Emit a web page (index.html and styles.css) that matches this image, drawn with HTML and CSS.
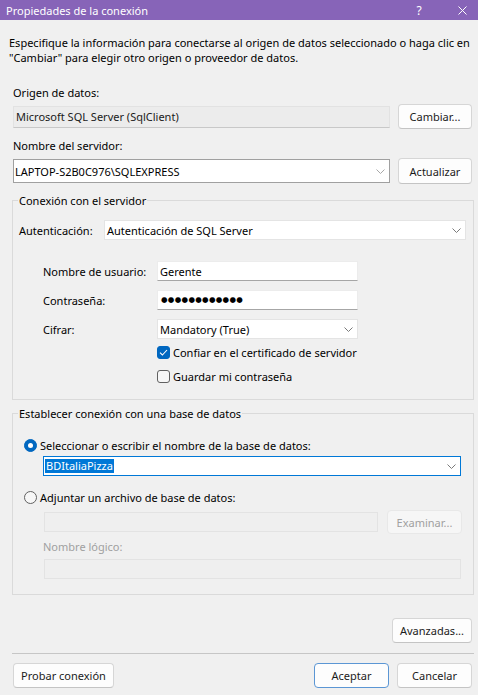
FILE: index.html
```html
<!DOCTYPE html>
<html lang="es">
<head>
<meta charset="utf-8">
<title>Propiedades de la conexión</title>
<link rel="stylesheet" href="styles.css">
</head>
<body>
<div class="titlebar">
  <span class="title">Propiedades de la conexión</span>
  <span class="tb-help">?</span>
  <svg class="tb-close" width="9" height="9" viewBox="0 0 9 9"><path d="M0.5 0.5 L8.5 8.5 M8.5 0.5 L0.5 8.5" stroke="#fff" stroke-width="1" fill="none"/></svg>
</div>
<div class="main">
  <p class="desc">Especifique la información para conectarse al origen de datos seleccionado o haga clic en<br>"Cambiar" para elegir otro origen o proveedor de datos.</p>

  <div class="lbl lbl-origen">Origen de datos:</div>
  <div class="row row-origen">
    <div class="readonly">Microsoft SQL Server (SqlClient)</div>
    <button class="btn">Cambiar...</button>
  </div>

  <div class="lbl lbl-server">Nombre del servidor:</div>
  <div class="row row-server">
    <div class="combo combo-server">
      <span>LAPTOP-S2B0C976\SQLEXPRESS</span>
      <svg class="chev chev-light" width="9" height="5" viewBox="0 0 9 5"><path d="M0.5 0.5 L4.5 4.5 L8.5 0.5" fill="none" stroke="currentColor" stroke-width="1"/></svg>
    </div>
    <button class="btn btn-h26">Actualizar</button>
  </div>

  <fieldset class="group group-server">
    <legend>Conexión con el servidor</legend>
    <div class="auth-row">
      <span class="auth-label">Autenticación:</span>
      <div class="combo combo-auth">
        <span>Autenticación de SQL Server</span>
        <svg class="chev" width="9" height="5" viewBox="0 0 9 5"><path d="M0.5 0.5 L4.5 4.5 L8.5 0.5" fill="none" stroke="currentColor" stroke-width="1"/></svg>
      </div>
    </div>
    <div class="field-row fr-user">
      <span class="field-label">Nombre de usuario:</span>
      <div class="textbox">Gerente</div>
    </div>
    <div class="field-row fr-gap">
      <span class="field-label">Contraseña:</span>
      <div class="textbox"><span class="pw">●●●●●●●●●●●●</span></div>
    </div>
    <div class="field-row fr-gap">
      <span class="field-label">Cifrar:</span>
      <div class="combo combo-cifrar">
        <span>Mandatory (True)</span>
        <svg class="chev" width="9" height="5" viewBox="0 0 9 5"><path d="M0.5 0.5 L4.5 4.5 L8.5 0.5" fill="none" stroke="currentColor" stroke-width="1"/></svg>
      </div>
    </div>
    <div class="check-row cr-first">
      <span class="checkbox checked"><svg width="9" height="7" viewBox="0 0 9 7"><path d="M1 3.6 L3.4 6 L8 1" fill="none" stroke="#fff" stroke-width="1.1"/></svg></span>
      <span>Confiar en el certificado de servidor</span>
    </div>
    <div class="check-row cr-second">
      <span class="checkbox"></span>
      <span>Guardar mi contraseña</span>
    </div>
  </fieldset>

  <fieldset class="group group-db">
    <legend>Establecer conexión con una base de datos</legend>
    <div class="radio-row rr-first">
      <span class="radio selected"><span class="radio-dot"></span></span>
      <span>Seleccionar o escribir el nombre de la base de datos:</span>
    </div>
    <div class="combo combo-db">
      <span class="sel">BDItaliaPizza</span>
      <svg class="chev" width="9" height="5" viewBox="0 0 9 5"><path d="M0.5 0.5 L4.5 4.5 L8.5 0.5" fill="none" stroke="currentColor" stroke-width="1"/></svg>
    </div>
    <div class="radio-row rr-second">
      <span class="radio"></span>
      <span>Adjuntar un archivo de base de datos:</span>
    </div>
    <div class="attach-row">
      <div class="disabled-box db-file"></div>
      <button class="btn btn-disabled">Examinar...</button>
    </div>
    <div class="disabled-label">Nombre lógico:</div>
    <div class="disabled-box db-logic"></div>
  </fieldset>

  <div class="adv-row">
    <button class="btn btn-adv">Avanzadas...</button>
  </div>
  <div class="sep"></div>
  <div class="footer">
    <button class="btn btn-test">Probar conexión</button>
    <div class="footer-right">
      <button class="btn btn-default">Aceptar</button>
      <button class="btn">Cancelar</button>
    </div>
  </div>
</div>
</body>
</html>
```

FILE: styles.css
```css
* { box-sizing: border-box; }

html, body {
  margin: 0;
  padding: 0;
}

body {
  width: 478px;
  height: 695px;
  overflow: hidden;
  background: #f0f0f0;
  color: #000;
  font-family: "Noto Sans", "Open Sans", sans-serif;
  font-size: 11px;
  line-height: 15px;
}

.titlebar {
  height: 20px;
  background: #8764b8;
  color: #fff;
  display: flex;
  align-items: center;
  padding-left: 6px;
  font-size: 11px;
}
.title { flex: 1; }
.tb-help {
  width: 10px;
  text-align: center;
  margin-right: 34px;
  font-size: 12px;
}
.tb-close { margin-right: 11px; }

.main {
  padding: 0 6px 0 13px;
}

.desc {
  margin: 15px 0 0 -4px;
  color: #000;
}

.lbl-origen { margin-top: 20px; }
.lbl-server { margin-top: 9px; }

.row {
  display: flex;
  align-items: center;
  gap: 8px;
}
.row-origen { margin-top: 4px; height: 25px; }
.row-server { margin-top: 5px; height: 26px; }

.readonly {
  width: 377px;
  height: 22px;
  background: #ececec;
  border: 1px solid #e2e2e2;
  border-bottom-color: #c8c8c8;
  padding: 0 2px;
  display: flex;
  align-items: center;
  color: #1a1a1a;
}

.btn {
  width: 74px;
  height: 25px;
  margin: 0;
  padding: 0;
  background: #fdfdfd;
  border: 1px solid #d6d6d6;
  border-bottom-color: #c4c4c4;
  border-radius: 4px;
  font: inherit;
  color: #1b1b1b;
}
.btn-h26 { height: 26px; }

.combo {
  display: flex;
  align-items: center;
  justify-content: space-between;
  background: #fff;
  padding: 0 4px 0 2px;
  height: 20px;
}
.chev { color: #7a7a7a; flex: none; }
.chev-light { color: #a8a8a8; }

.combo-server {
  width: 377px;
  height: 24px;
  border: 1px solid #a0a0a0;
  padding-left: 1px;
}

.group {
  margin: 9px 0 0 -1px;
  width: 462px;
  min-width: 0;
  padding: 0 6px 15px 6px;
  border: 1px solid #dadada;
}
.group legend {
  padding: 0 1px;
  margin-left: -1px;
  line-height: 15px;
  color: #000;
}
.group-db { margin-top: 6px; }

.auth-row {
  display: flex;
  align-items: center;
  margin-top: 12px;
}
.auth-label { width: 85px; }
.combo-auth {
  width: 362px;
  border: 1px solid #e4e4e4;
  padding-left: 2px;
}

.field-row {
  display: flex;
  align-items: center;
  margin-left: 24px;
  height: 20px;
}
.fr-user { margin-top: 21px; }
.fr-gap { margin-top: 9px; }
.field-label { width: 114px; }

.textbox {
  width: 201px;
  height: 20px;
  background: #fff;
  border: 1px solid #ececec;
  border-bottom-color: #a6a6a6;
  padding: 0 2px;
  display: flex;
  align-items: center;
}
.pw {
  font-family: "DejaVu Sans", sans-serif;
  font-size: 7.5px;
  letter-spacing: 0.3px;
  line-height: 10px;
  color: #000;
  padding-left: 1px;
}

.combo-cifrar {
  width: 201px;
  border: 1px solid #e4e4e4;
  padding-left: 2px;
}

.check-row {
  display: flex;
  align-items: center;
  gap: 3px;
  margin-left: 138px;
  height: 15px;
}
.cr-first { margin-top: 6px; }
.cr-second { margin-top: 9px; }

.checkbox {
  width: 13px;
  height: 13px;
  border: 1px solid #616161;
  border-radius: 3px;
  background: #f7f7f7;
  display: flex;
  align-items: center;
  justify-content: center;
  flex: none;
}
.checkbox.checked {
  background: #0067c0;
  border-color: #0067c0;
}

.radio-row {
  display: flex;
  align-items: center;
  gap: 3px;
  margin-left: 5px;
  height: 15px;
}
.rr-first { margin-top: 17px; }
.rr-second { margin-top: 14px; }

.radio {
  width: 13px;
  height: 13px;
  border: 1px solid #616161;
  border-radius: 50%;
  background: #f7f7f7;
  display: flex;
  align-items: center;
  justify-content: center;
  flex: none;
}
.radio.selected {
  background: #0067c0;
  border-color: #0067c0;
}
.radio-dot {
  width: 5px;
  height: 5px;
  border-radius: 50%;
  background: #fff;
}

.combo-db {
  margin: 3px 0 0 24px;
  width: 418px;
  border: 1px solid #0078d7;
  padding-left: 1px;
}
.sel {
  background: #0078d7;
  color: #fff;
  line-height: 14px;
  padding: 0 1px;
}

.attach-row {
  display: flex;
  align-items: center;
  gap: 9px;
  margin: 5px 0 0 25px;
  height: 24px;
}
.disabled-box {
  height: 20px;
  background: #efefef;
  border: 1px solid #e3e3e3;
}
.db-file { width: 334px; }
.btn-disabled {
  width: 75px;
  height: 24px;
  background: #f6f6f6;
  border-color: #e8e8e8;
  color: #a0a0a0;
}
.disabled-label {
  margin: 5px 0 0 24px;
  color: #a0a0a0;
}
.db-logic {
  margin: 5px 0 0 25px;
  width: 417px;
}

.adv-row {
  display: flex;
  justify-content: flex-end;
  margin-top: 23px;
}
.btn-adv { width: 80px; }

.sep {
  margin: 10px -2px 0 -1px;
  height: 1px;
  background: #c6c6c6;
}

.footer {
  display: flex;
  justify-content: space-between;
  align-items: center;
  margin-top: 9px;
}
.footer-right {
  display: flex;
  gap: 8px;
}
.footer-right .btn { width: 75px; }
.btn-test { width: 101px; }
.btn-default {
  border-color: #5b96d4;
}
```
